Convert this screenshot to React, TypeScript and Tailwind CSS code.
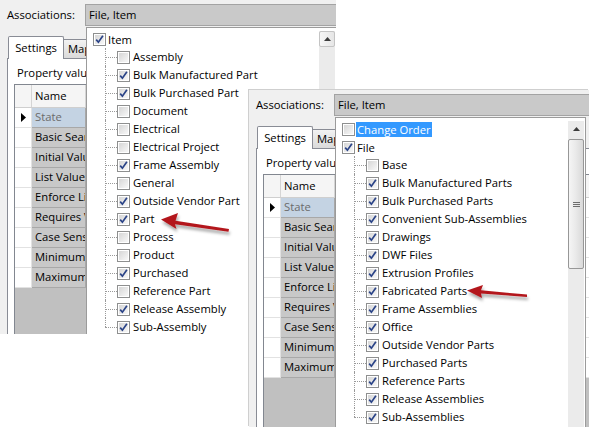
import React from "react";

type TreeNode = {
  label: string;
  checked: boolean;
  selected?: boolean;
  children?: TreeNode[];
};

const itemTree: TreeNode[] = [
  {
    label: "Item",
    checked: true,
    children: [
      { label: "Assembly", checked: false },
      { label: "Bulk Manufactured Part", checked: true },
      { label: "Bulk Purchased Part", checked: true },
      { label: "Document", checked: false },
      { label: "Electrical", checked: false },
      { label: "Electrical Project", checked: false },
      { label: "Frame Assembly", checked: true },
      { label: "General", checked: false },
      { label: "Outside Vendor Part", checked: true },
      { label: "Part", checked: true },
      { label: "Process", checked: false },
      { label: "Product", checked: false },
      { label: "Purchased", checked: true },
      { label: "Reference Part", checked: false },
      { label: "Release Assembly", checked: true },
      { label: "Sub-Assembly", checked: true },
    ],
  },
];

const fileTree: TreeNode[] = [
  { label: "Change Order", checked: false, selected: true },
  {
    label: "File",
    checked: true,
    children: [
      { label: "Base", checked: false },
      { label: "Bulk Manufactured Parts", checked: true },
      { label: "Bulk Purchased Parts", checked: true },
      { label: "Convenient Sub-Assemblies", checked: true },
      { label: "Drawings", checked: true },
      { label: "DWF Files", checked: true },
      { label: "Extrusion Profiles", checked: true },
      { label: "Fabricated Parts", checked: true },
      { label: "Frame Assemblies", checked: true },
      { label: "Office", checked: true },
      { label: "Outside Vendor Parts", checked: true },
      { label: "Purchased Parts", checked: true },
      { label: "Reference Parts", checked: true },
      { label: "Release Assemblies", checked: true },
      { label: "Sub-Assemblies", checked: true },
    ],
  },
];

// The dropdown covers most of the property grid, so only the start of each name shows.
const propertyRows = [
  "State",
  "Basic Search",
  "Initial Value",
  "List Values",
  "Enforce List",
  "Requires Value",
  "Case Sensitive",
  "Minimum",
  "Maximum",
];

function CheckBox({ checked }: { checked: boolean }) {
  return (
    <span className="relative flex h-[13px] w-[13px] shrink-0 items-center justify-center border border-[#8e8f8f] bg-white">
      <span className="absolute inset-[1px] bg-linear-to-br from-[#d6d6d6] to-[#f8f8f8]" />
      {checked && (
        <svg className="relative" width="11" height="11" viewBox="0 0 11 11">
          <path d="M2.2 5.6 L4.4 8.2 L8.9 1.8" fill="none" stroke="#2a4387" strokeWidth="1.7" />
        </svg>
      )}
    </span>
  );
}

function Label({ node }: { node: TreeNode }) {
  return (
    <span
      className={`whitespace-nowrap px-[1px] leading-[15px] ${
        node.selected ? "bg-[#3399ff] text-white" : ""
      }`}
    >
      {node.label}
    </span>
  );
}

function Tree({ roots }: { roots: TreeNode[] }) {
  return (
    <div className="flex flex-col pt-[2px]">
      {roots.map((root) => (
        <div key={root.label} className="flex flex-col">
          <div className="flex h-[18px] items-center gap-[1px] pl-[6px]">
            <CheckBox checked={root.checked} />
            <Label node={root} />
          </div>
          {root.children?.map((child, i) => {
            const last = i === root.children!.length - 1;
            return (
              <div key={child.label} className="flex h-[18px] items-center">
                <span className="w-[18px] shrink-0" />
                <span className="relative h-full w-[12px] shrink-0">
                  <span
                    className={`absolute left-0 top-0 border-l border-dotted border-[#9a9a9a] ${
                      last ? "h-[9px]" : "h-full"
                    }`}
                  />
                  <span className="absolute left-0 top-[9px] w-full border-t border-dotted border-[#9a9a9a]" />
                </span>
                <CheckBox checked={child.checked} />
                <span className="ml-[2px]">
                  <Label node={child} />
                </span>
              </div>
            );
          })}
        </div>
      ))}
    </div>
  );
}

function ScrollBar({ thumb, hover }: { thumb?: boolean; hover?: boolean }) {
  return (
    <div className="absolute bottom-0 right-[1px] top-[3px] flex w-[16px] flex-col bg-[#ebebeb]">
      <div
        className={`flex h-[16px] shrink-0 items-center justify-center rounded-[2px] ${
          hover ? "border border-[#c4c4c4] bg-linear-to-r from-[#f6f6f6] to-[#e6e6e6]" : ""
        }`}
      >
        <svg width="7" height="4" viewBox="0 0 7 4">
          <path d="M0 4 L3.5 0 L7 4 Z" fill="#3c3c3c" />
        </svg>
      </div>
      {thumb && (
        <div className="mt-[2px] flex h-[130px] shrink-0 flex-col items-center justify-center gap-[1px] rounded-[2px] border border-[#979797] bg-linear-to-r from-[#f5f5f5] via-[#e9e9e9] to-[#d9d9d9]">
          <span className="h-px w-[7px] bg-[#6e6e6e]" />
          <span className="h-px w-[7px] bg-[#6e6e6e]" />
          <span className="h-px w-[7px] bg-[#6e6e6e]" />
        </div>
      )}
    </div>
  );
}

function PropertyGrid() {
  return (
    <div className="ml-[6px] mt-[3px] flex flex-1 flex-col border border-b-0 border-[#828790] bg-[#c0c0c0]">
      <div className="flex h-[23px] shrink-0 border-b border-[#cfcfcf] bg-[#f5f5f5]">
        <div className="w-[17px] shrink-0 border-r border-[#d5d5d5]" />
        <div className="flex w-[54px] shrink-0 items-center overflow-hidden border-r border-[#d5d5d5] pl-[3px]">Name</div>
        <div className="flex-1" />
      </div>
      {propertyRows.map((name, i) => (
        <div key={name} className="flex h-[20px] shrink-0">
          <div className="flex w-[17px] shrink-0 items-center justify-center border-b border-r border-[#e2e2e2] bg-white">
            {i === 0 && (
              <svg width="5" height="9" viewBox="0 0 5 9">
                <path d="M0 0 L5 4.5 L0 9 Z" fill="#000" />
              </svg>
            )}
          </div>
          <div
            className={`flex w-[54px] shrink-0 items-center overflow-hidden whitespace-nowrap border-b border-r border-[#a8a8a8] pl-[3px] ${
              i === 0 ? "bg-[#c4d3e3] text-[#6b6b6b]" : "bg-[#c8c8c8]"
            }`}
          >
            {name}
          </div>
          <div className="flex-1 border-b border-[#e2e2e2] bg-white" />
        </div>
      ))}
    </div>
  );
}

function AssociationsPanel({
  className,
  tree,
  thumb,
  hover,
}: {
  className: string;
  tree: TreeNode[];
  thumb?: boolean;
  hover?: boolean;
}) {
  return (
    <div className={`absolute isolate flex flex-col overflow-hidden bg-[#f0f0f0] ${className}`}>
      <div className="flex h-[26px] shrink-0 items-start pl-[7px] pt-[4px]">
        <span className="w-[78px] shrink-0 leading-[21px]">Associations:</span>
        <div className="h-[22px] w-[320px] shrink-0 border border-[#a3a3a3] bg-[#c9c9c9] pl-[3px] leading-[20px]">
          File, Item
        </div>
      </div>

      <div className="relative z-10 mt-[10px] flex shrink-0 items-end pl-[8px]">
        <div className="-mb-px flex h-[23px] w-[56px] items-center justify-center rounded-t-[2px] border border-b-0 border-[#898c95] bg-white">
          Settings
        </div>
        <div className="flex h-[19px] w-[24px] items-center overflow-hidden border border-b-0 border-l-0 border-[#898c95] bg-linear-to-b from-[#f2f2f2] to-[#dadada] pl-[4px]">
          <span className="whitespace-nowrap">Mappings</span>
        </div>
      </div>

      <div className="ml-[7px] flex w-[420px] flex-1 flex-col border border-b-0 border-[#898c95] bg-white">
        <div className="w-[78px] overflow-hidden whitespace-nowrap pl-[9px] pt-[6px] leading-[16px]">
          Property values:
        </div>
        <PropertyGrid />
      </div>

      <div className="absolute left-[86px] top-[27px] z-20 h-[330px] w-[251px] border border-[#9b9b9b] bg-white">
        <Tree roots={tree} />
        <ScrollBar thumb={thumb} hover={hover} />
      </div>
    </div>
  );
}

export default function App() {
  return (
    <div className="relative h-[427px] w-[589px] overflow-hidden bg-white font-['Open_Sans',sans-serif] text-[11.25px] text-black">
      <AssociationsPanel className="left-0 top-0 h-[334px] w-[336px]" tree={itemTree} hover />
      <AssociationsPanel
        className="left-[249px] top-[90px] h-[337px] w-[340px] shadow-[-1px_-1px_0_#cfcfcf]"
        tree={fileTree}
        thumb
      />

      <svg className="pointer-events-none absolute inset-0" width="589" height="427" viewBox="0 0 589 427">
        <defs>
          <filter id="arrowShadow" x="-20%" y="-50%" width="140%" height="220%">
            <feDropShadow dx="1" dy="3" stdDeviation="1.6" floodColor="#000" floodOpacity="0.35" />
          </filter>
        </defs>
        <polygon
          points="161,219.5 178,213 175.5,220.8 229,229 228.5,231.8 175,224.2 176.5,229"
          fill="#b3171b"
          filter="url(#arrowShadow)"
        />
        <polygon
          points="467,290.5 483,285 481,290.3 527,294.5 527,297 481,293.5 482,298"
          fill="#b3171b"
          filter="url(#arrowShadow)"
        />
      </svg>
    </div>
  );
}
